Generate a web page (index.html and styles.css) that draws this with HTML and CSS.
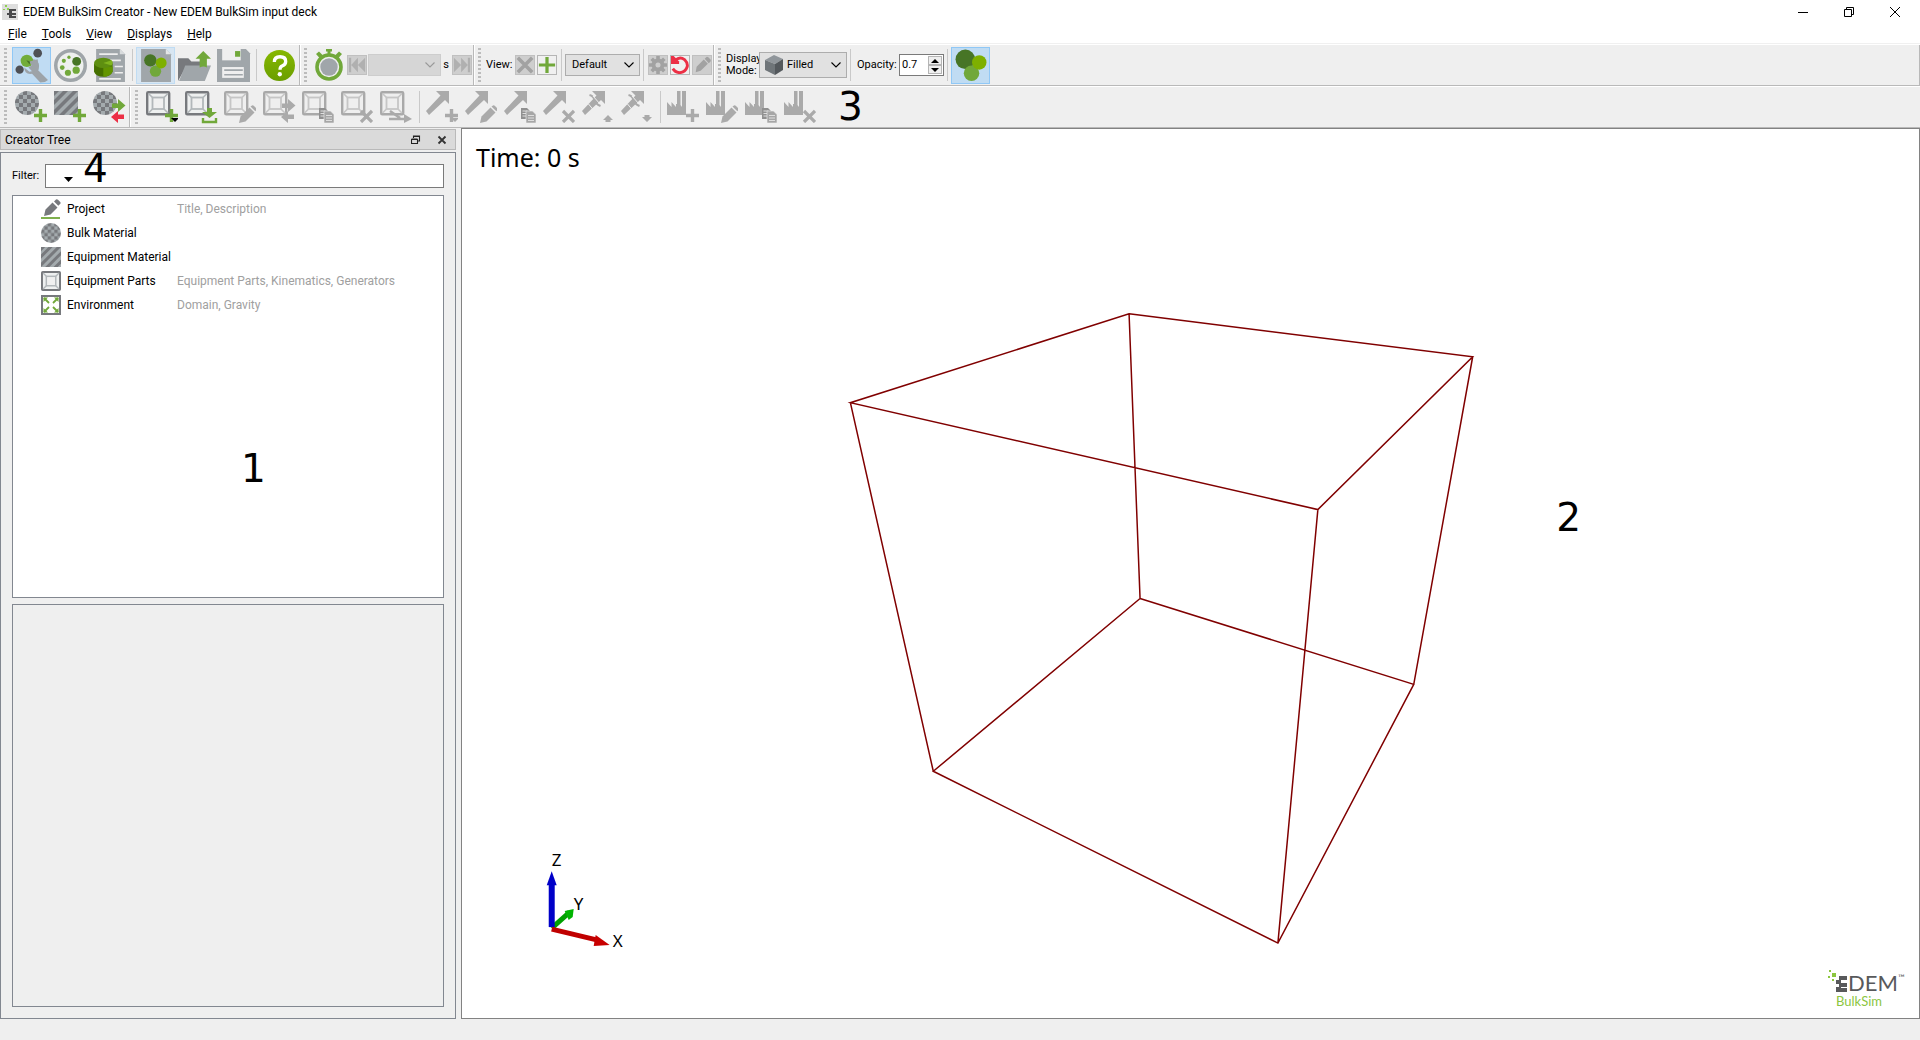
FILE: index.html
```html
<!DOCTYPE html>
<html lang="en">
<head>
<meta charset="utf-8">
<title>EDEM BulkSim Creator - New EDEM BulkSim input deck</title>
<link rel="stylesheet" href="styles.css">
</head>
<body>
<svg class="defs" aria-hidden="true">
  <defs>
    <pattern id="checks" width="8" height="8" patternUnits="userSpaceOnUse"><rect width="8" height="8" fill="#a4abae"/><path d="M0 0h4v4H0zM4 4h4v4H4z" fill="#77797d"/></pattern>
    <linearGradient id="helpfill" x1="0" y1="0" x2="0" y2="1"><stop offset="0" stop-color="#86b800"/><stop offset="1" stop-color="#6a9e00"/></linearGradient>
  </defs>
  <symbol id="plus" viewBox="0 0 32 32"><path d="M19 24.500h13M25.500 18v13" stroke="currentColor" stroke-width="3.400"/></symbol>
  <symbol id="drop" viewBox="0 0 32 32"><path d="M25 27h8l-4 4z" fill="currentColor"/></symbol>
  <symbol id="cross" viewBox="0 0 32 32"><path d="M20 20l11 11M31 20L20 31" stroke="currentColor" stroke-width="3.200"/></symbol>
  <symbol id="pen" viewBox="0 0 32 32"><path d="M15 32l1.500-6.500 9-9 5 5-9 9z" fill="currentColor"/><path d="M26.500 15.500l1.500-1q1-.5 2 .5l2 2q1 1 .3 2l-1 1.300z" fill="currentColor"/></symbol>
  <symbol id="copy" viewBox="0 0 32 32"><path d="M17 17h6l2.500 2.500V28H17z" fill="#909090"/><path d="M18.500 20h5M18.500 22.500h5M18.500 25h5" stroke="#ddd"/><path d="M22 20h6.500l3.500 3.500V32H22z" fill="#a6a6a6" stroke="#efefef" stroke-width=".6"/><path d="M24 24.500h6M24 27h6M24 29.500h6" stroke="#ddd"/></symbol>
  <symbol id="frame" viewBox="0 0 32 32"><rect x="1.200" y="1.200" width="22" height="22" rx="1" fill="#eef0f0" stroke="#77797d" stroke-width="2.400"/><rect x="6.500" y="6.500" width="11.500" height="11.500" fill="#f0f0f0" stroke="#b2b7ba" stroke-width="1.800"/><path d="M2.500 2.500l4 4M22 2.500l-4 4M2.500 22l4-4M22 22l-4-4" stroke="#b2b7ba" stroke-width="1.600"/></symbol>
  <symbol id="frameoff" viewBox="0 0 32 32"><rect x="1.200" y="1.200" width="22" height="22" rx="1" fill="#efefef" stroke="#a9a9a9" stroke-width="2.400"/><rect x="6.500" y="6.500" width="11.500" height="11.500" fill="none" stroke="#c6c6c6" stroke-width="1.800"/><path d="M2.500 2.500l4 4M22 2.500l-4 4M2.500 22l4-4M22 22l-4-4" stroke="#c6c6c6" stroke-width="1.600"/></symbol>
  <symbol id="arrow" viewBox="0 0 32 32"><path d="M10 0h13v13l-4-4L3 24l-3-4L14.500 4.500z" fill="currentColor"/></symbol>
  <symbol id="brokenarrow" viewBox="0 0 32 32"><path d="M10 0h13v13l-4-4L3 24l-3-4L14.500 4.500z" fill="currentColor"/><path d="M7.500 4q4 1 5 5t6 6" fill="none" stroke="currentColor" stroke-width="2"/><path d="M11 5l7 8M6.500 13l5 6" fill="none" stroke="#efefef" stroke-width="1"/></symbol>
  <symbol id="factory" viewBox="0 0 32 32"><path d="M0 24V11l4.500 5v-5l4.500 5v-3h1V0h3.500v14l1.500 2V0H19v24z" fill="currentColor"/></symbol>
  <symbol id="balls" viewBox="0 0 32 32"><circle cx="11" cy="10" r="9.500" fill="#477526"/><circle cx="17" cy="23.500" r="7.500" fill="#71a83a"/><circle cx="24.500" cy="13" r="7" fill="#7eb000"/></symbol>
  <symbol id="stripes" viewBox="0 0 24 24"><rect width="24" height="24" fill="#a4abae"/><path d="M0 4V0h5L0 5zM0 9l9-9h5L0 14zM0 19L19 0h5L0 24zM5 24L24 5v5L10 24zM15 24l9-9v5l-4 4z" fill="#77797d"/></symbol>
  <symbol id="chev" viewBox="0 0 10 10"><path d="M.5 2.500L5 7l4.500-4.500" fill="none" stroke="currentColor" stroke-width="1.100"/></symbol>
</svg>

<header class="titlebar">
  <svg class="appicon" viewBox="0 0 16 16"><rect width="16" height="16" fill="#dedede"/><path d="M7 5h7v2h-4v2h4v2h-4v1h4v2H7v-3H5V9h2z" fill="#4b4b4d"/><path d="M3 1h2v2H3zM5 4h2v2H5zM1 5h2v1H1z" fill="#8fd050"/></svg>
  <h1 class="apptitle">EDEM BulkSim Creator - New EDEM BulkSim input deck</h1>
  <div class="wincontrols">
    <button class="winbtn" aria-label="Minimize"><svg viewBox="0 0 10 10"><path d="M0 5.500h10" stroke="#000"/></svg></button>
    <button class="winbtn" aria-label="Restore"><svg viewBox="0 0 10 10"><path d="M.5 2.500h7v7h-7zM2.500 2V.5h7v7H8" fill="none" stroke="#000"/></svg></button>
    <button class="winbtn" aria-label="Close"><svg viewBox="0 0 10 10"><path d="M0 0l10 10M10 0L0 10" stroke="#000"/></svg></button>
  </div>
</header>

<nav class="menubar">
  <button class="menu"><u>F</u>ile</button>
  <button class="menu"><u>T</u>ools</button>
  <button class="menu"><u>V</u>iew</button>
  <button class="menu"><u>D</u>isplays</button>
  <button class="menu"><u>H</u>elp</button>
</nav>

<div class="toolrow">
  <div class="toolbar">
    <i class="grip"></i>
    <button class="tool active" aria-label="Creator"><svg viewBox="0 0 32 32"><path d="M15.500 10Q21 9 23 14q1 4-1 6l10 10-3 2-4.500.5-8-8.500Q9 25 9 18l5 4 4-1 1-5z" fill="#9da3a8"/><circle cx="11.500" cy="11.500" r="6" fill="#72ad3a"/><path d="M11 11l4 1-1 3z" fill="#477526"/><path d="M14 12l8-2 1 10-6 2-4-4 3-2z" fill="#9da3a8"/><circle cx="22" cy="4" r="4.200" fill="#4e5055"/><circle cx="4.500" cy="20" r="4" fill="#4e5055"/></svg></button>
    <button class="tool" aria-label="Simulator"><svg viewBox="0 0 32 32"><circle cx="16" cy="16" r="14.300" fill="#eef0ee" stroke="#9fa5a9" stroke-width="3.400"/><circle cx="22" cy="12" r="4.300" fill="#477526"/><circle cx="21.500" cy="20.500" r="3.500" fill="#71a83a"/><circle cx="13.500" cy="23" r="3" fill="#71a83a"/><circle cx="8" cy="18" r="2.300" fill="#71a83a"/><circle cx="9.500" cy="11.500" r="2" fill="#71a83a"/><circle cx="14.500" cy="8" r="1.600" fill="#71a83a"/></svg></button>
    <button class="tool" aria-label="Analyst"><svg viewBox="0 0 32 32"><path d="M3 0h23l5 5v27H3z" fill="#a0a6aa"/><path d="M26 0v5h5z" fill="#d9dcdd"/><path d="M6 5h18M6 11h21M21 17h8M21 23h8M6 29h21" stroke="#eee" stroke-width="1.600"/><path d="M1 14v8q2 5 9 5t9-5v-8z" fill="#467000"/><path d="M10 17h9v5q-3 5-9 5z" fill="#639500"/><ellipse cx="10" cy="13.500" rx="9" ry="5" fill="#5e8f10"/><path d="M10 13.500l8 2.500q2-3 0-5z" fill="#80b51e"/></svg></button>
    <i class="sep"></i>
    <button class="tool hover" aria-label="New"><svg viewBox="0 0 32 32"><path d="M2 0h24l5 5v27H2z" fill="#a0a6aa"/><path d="M26 0v5h5z" fill="#e4e6e7"/><circle cx="11" cy="11" r="6" fill="#477526"/><circle cx="16" cy="21.500" r="5.500" fill="#71a83a"/><circle cx="21.500" cy="13.500" r="5.300" fill="#7eb000"/></svg></button>
    <button class="tool" aria-label="Open"><svg viewBox="0 0 32 32"><path d="M0 9h10l3 3h12v5H8L0 31z" fill="#77797d"/><path d="M7 16h25l-6 15H1z" fill="#a0a6aa"/><path d="M24.500 2l7.500 7.500h-4V18q-3-2-7 0V9.500h-4z" fill="#71a83a"/></svg></button>
    <button class="tool" aria-label="Save"><svg viewBox="0 0 32 32"><path d="M0 0h28l4 4v28H0z" fill="#a0a6aa"/><path d="M5 0h18v11H5z" fill="#efefef"/><path d="M17.500 2h5v5.500h-5z" fill="#71a83a"/><path d="M5 17.500h21V28H5z" fill="#efefef"/><path d="M7 20.500h18M7 25h18" stroke="#a0a6aa" stroke-width="1.600"/></svg></button>
    <i class="sep"></i>
    <button class="tool" aria-label="Help"><svg viewBox="0 0 32 32"><circle cx="16" cy="16" r="15" fill="url(#helpfill)"/><path d="M11 12.500q0-5 5.500-5t5.500 4.500q0 3-3.500 4.500-2 1-2 3.500" fill="none" stroke="#fff" stroke-width="3.200"/><circle cx="16.300" cy="24.500" r="2.100" fill="#fff"/></svg></button>
  </div>
  <div class="toolbar">
    <i class="grip"></i>
    <span class="clock"><svg viewBox="0 0 30 34"><circle cx="15" cy="19" r="12" fill="#efefef" stroke="#71a83a" stroke-width="3.600"/><circle cx="15" cy="19" r="8.700" fill="#a0a6aa"/><path d="M12 1h6v2.500h-1.500V6h-3V3.500H12zM2 6l3-2.500 4 4-3 3zM28 6l-3-2.500-4 4 3 3z" fill="#71a83a"/></svg></span>
    <button class="mini off" aria-label="First step"><svg viewBox="0 0 20 20"><path d="M1 2h2.500v16H1zM11 2v16l-7.500-8zM19 2v16l-8-8z" fill="#b0b0b0"/></svg></button>
    <span class="combo time off"><select aria-label="Time step" disabled><option></option></select><svg class="chev"><use href="#chev"/></svg></span>
    <span class="unit">s</span>
    <button class="mini off" aria-label="Last step"><svg viewBox="0 0 20 20"><path d="M16.500 2H19v16h-2.500zM9 2v16l7.500-8zM1 2v16l8-8z" fill="#b0b0b0"/></svg></button>
  </div>
  <div class="toolbar">
    <i class="grip"></i>
    <label class="lbl view" for="view">View:</label>
    <button class="mini off" aria-label="Delete view"><svg viewBox="0 0 20 20"><path d="M2 2l16 16M18 2L2 18" stroke="#a2a2a2" stroke-width="4"/></svg></button>
    <button class="mini" aria-label="Add view"><svg viewBox="0 0 20 20"><path d="M1 10h18M10 1v18" stroke="#71a83a" stroke-width="3.600"/></svg></button>
    <i class="sep"></i>
    <span class="combo def"><select id="view"><option>Default</option></select><svg class="chev"><use href="#chev"/></svg></span>
    <i class="sep"></i>
    <button class="mini off" aria-label="View settings"><svg viewBox="0 0 20 20"><circle cx="10" cy="10" r="5" fill="none" stroke="#a2a2a2" stroke-width="4.400"/><path d="M10 0v4M10 16v4M0 10h4M16 10h4M3 3l3 3M14 14l3 3M17 3l-3 3M6 14l-3 3" stroke="#a2a2a2" stroke-width="4"/></svg></button>
    <button class="mini" aria-label="Reset view"><svg viewBox="0 0 20 20"><path d="M5 4.500Q10 0 15 4q4 4 3 8-2 6-8 6.500-5 0-8-4.500" fill="none" stroke="#ec2f45" stroke-width="3.200"/><path d="M0 0h3l6 6v3H0z" fill="#ec2f45"/></svg></button>
    <button class="mini off" aria-label="Rename view"><svg viewBox="0 0 20 20"><path d="M3 18l1-6 8-8 4.500 4.500-8 8zM13 3l2-2q1-.5 2 .5L19.500 4q.5 1 0 2l-2 2z" fill="#a2a2a2"/></svg></button>
  </div>
  <div class="toolbar last">
    <i class="grip"></i>
    <label class="lbl mode" for="mode">Display<br>Mode:</label>
    <span class="combo filled"><svg class="cube" viewBox="0 0 18 20"><path d="M9 0l9 4-8 5-10-4z" fill="#90969b"/><path d="M0 5l10 4v11L0 15z" fill="#6f7579"/><path d="M10 9l8-5v11l-8 5z" fill="#53585c"/></svg><select id="mode"><option>Filled</option></select><svg class="chev"><use href="#chev"/></svg></span>
    <i class="sep"></i>
    <label class="lbl opac" for="opacity">Opacity:</label>
    <span class="spin"><input id="opacity" type="number" step="0.1" value="0.7"><span class="steps"><button aria-label="Increase"><svg viewBox="0 0 8 4"><path d="M0 4h8L4 0z"/></svg></button><button aria-label="Decrease"><svg viewBox="0 0 8 4"><path d="M0 0h8L4 4z"/></svg></button></span></span>
    <i class="sep"></i>
    <button class="tool active" aria-label="Show particles"><svg><use href="#balls"/></svg></button>
  </div>
</div>

<div class="toolrow second">
  <div class="toolbar">
    <i class="grip"></i>
    <button class="tool" aria-label="Add bulk material"><svg viewBox="0 0 32 32"><circle cx="12" cy="12" r="12" fill="url(#checks)"/><use href="#plus" color="#71a83a"/></svg></button>
    <button class="tool" aria-label="Add equipment material"><svg viewBox="0 0 32 32"><use href="#stripes" width="24" height="24"/><use href="#plus" color="#71a83a"/></svg></button>
    <button class="tool" aria-label="Transfer materials"><svg viewBox="0 0 32 32"><circle cx="12" cy="12" r="12" fill="url(#checks)"/><path d="M19 12.500h6V8l7.500 6.500L25 21v-4h-6z" fill="#71a83a"/><path d="M31 23.500h-6V20l-7 6 7 6v-4h6z" fill="#ec2f45"/></svg></button>
  </div>
  <div class="toolbar last">
    <i class="grip"></i>
    <button class="tool" aria-label="Add part"><svg viewBox="0 0 32 32"><use href="#frame"/><use href="#plus" color="#71a83a"/><use href="#drop"/></svg></button>
    <button class="tool" aria-label="Import part"><svg viewBox="0 0 32 32"><use href="#frame"/><path d="M22 17h5v4h5l-7.500 6-7.500-6h5z" fill="#71a83a"/><path d="M18 27v4h13v-4" fill="none" stroke="#71a83a" stroke-width="2.400"/></svg></button>
    <button class="tool" aria-label="Edit part" disabled><svg viewBox="0 0 32 32"><use href="#frameoff"/><use href="#pen"/></svg></button>
    <button class="tool" aria-label="Transfer part" disabled><svg viewBox="0 0 32 32"><use href="#frameoff"/><path d="M19 12.500h6V8l7.500 6.500L25 21v-4h-6zM31 23.500h-6V20l-7 6 7 6v-4h6z" fill="currentColor"/></svg></button>
    <button class="tool" aria-label="Copy part" disabled><svg viewBox="0 0 32 32"><use href="#frameoff"/><use href="#copy"/></svg></button>
    <button class="tool" aria-label="Delete part" disabled><svg viewBox="0 0 32 32"><use href="#frameoff"/><use href="#cross"/></svg></button>
    <button class="tool" aria-label="Move part" disabled><svg viewBox="0 0 32 32"><use href="#frameoff"/><path d="M10 20l10 7M9 28h17" stroke="currentColor" stroke-width="2.600"/><path d="M24 23l8 5-8 4z" fill="currentColor"/></svg></button>
    <i class="sep"></i>
    <button class="tool" aria-label="Add kinematic" disabled><svg viewBox="0 0 32 32"><use href="#arrow"/><use href="#plus"/><use href="#drop"/></svg></button>
    <button class="tool" aria-label="Edit kinematic" disabled><svg viewBox="0 0 32 32"><use href="#arrow"/><use href="#pen"/></svg></button>
    <button class="tool" aria-label="Copy kinematic" disabled><svg viewBox="0 0 32 32"><use href="#arrow"/><use href="#copy"/></svg></button>
    <button class="tool" aria-label="Delete kinematic" disabled><svg viewBox="0 0 32 32"><use href="#arrow"/><use href="#cross"/></svg></button>
    <button class="tool" aria-label="Kinematic up" disabled><svg viewBox="0 0 32 32"><use href="#brokenarrow"/><path d="M21 29l5-5 5 5h-2.500v2h-5v-2z" fill="currentColor"/></svg></button>
    <button class="tool" aria-label="Kinematic down" disabled><svg viewBox="0 0 32 32"><use href="#brokenarrow"/><path d="M21 26l5 5 5-5h-2.500v-2h-5v2z" fill="currentColor"/></svg></button>
    <i class="sep"></i>
    <button class="tool" aria-label="Add generator" disabled><svg viewBox="0 0 32 32"><use href="#factory"/><use href="#plus"/></svg></button>
    <button class="tool" aria-label="Edit generator" disabled><svg viewBox="0 0 32 32"><use href="#factory"/><use href="#pen"/></svg></button>
    <button class="tool" aria-label="Copy generator" disabled><svg viewBox="0 0 32 32"><use href="#factory"/><use href="#copy"/></svg></button>
    <button class="tool" aria-label="Delete generator" disabled><svg viewBox="0 0 32 32"><use href="#factory"/><use href="#cross"/></svg></button>
    <span class="mark m3">3</span>
  </div>
</div>

<main class="work">
  <aside class="dock">
    <div class="dockhead">
      <h2>Creator Tree</h2>
      <button aria-label="Float"><svg viewBox="0 0 10 10"><path d="M.5 4.500h6v4h-6zM.5 4h6M2.500 3V1h6v5H7M2.500 1.500h6" fill="none" stroke="#222" stroke-width="1.100"/></svg></button>
      <button aria-label="Close dock"><svg viewBox="0 0 10 10"><path d="M1.500 1.500l7 7M8.500 1.500l-7 7" stroke="#333" stroke-width="1.800"/></svg></button>
    </div>
    <div class="dockbody">
      <div class="filter">
        <label class="lbl" for="filter">Filter:</label>
        <span class="filterbox"><input id="filter" type="text"><svg class="caret" viewBox="0 0 9 5"><path d="M0 0h9L4.500 5z"/></svg><span class="mark m4">4</span></span>
      </div>
      <div class="pane tree">
        <ul>
          <li><svg viewBox="0 0 20 20"><path d="M3 17l1.500-6.500 7-7 5 5-7 7zM13 2.500l2-2q1-.8 2 .2l2 2q1 1 .3 2l-2 2z" fill="#77797d"/><path d="M0 19h19" stroke="#71a83a" stroke-width="1.800"/></svg><span>Project</span><span class="hint">Title, Description</span></li>
          <li><svg viewBox="0 0 24 24"><circle cx="12" cy="12" r="12" fill="url(#checks)"/></svg><span>Bulk Material</span></li>
          <li><svg><use href="#stripes"/></svg><span>Equipment Material</span></li>
          <li><svg viewBox="0 0 24.400 24.400"><use href="#frame" width="32" height="32"/></svg><span>Equipment Parts</span><span class="hint">Equipment Parts, Kinematics, Generators</span></li>
          <li><svg viewBox="0 0 20 20"><rect x="1" y="1" width="18" height="18" fill="#fff" stroke="#77797d" stroke-width="2"/><path d="M3 3l5 5M17 3l-5 5M3 17l5-5M17 17l-5-5" stroke="#71a83a" stroke-width="1.800"/><path d="M2.500 2.500H7L2.500 7zM17.500 2.500H13L17.500 7zM2.500 17.500H7L2.500 13zM17.500 17.500H13l4.500-4.500z" fill="#71a83a"/></svg><span>Environment</span><span class="hint">Domain, Gravity</span></li>
        </ul>
        <span class="mark m1">1</span>
      </div>
      <div class="pane"></div>
    </div>
  </aside>
  <section class="viewport" aria-label="3D view">
    <svg class="scene" viewBox="0 0 1457 890" preserveAspectRatio="xMidYMid meet">
      <path d="M667 185L1011 228L856 381L388 274ZM678 470L952 556L816 815L471 643ZM667 185L678 470M1011 228L952 556M856 381L816 815M388 274L471 643" fill="none" stroke="#800000" stroke-width="1.500"/>
      <path d="M89 800l18-16" stroke="#00a000" stroke-width="5"/><path d="M102 783l9-2-1 8-4 3z" fill="#00b400"/>
      <path d="M89 799l0-45" stroke="#0000c8" stroke-width="6"/><path d="M84 757l5-14 5 14z" fill="#0000c8"/>
      <path d="M89 801l46 11" stroke="#c00000" stroke-width="5"/><path d="M133 807l14 10-16 1z" fill="#c80000"/>
      <text class="axis" x="89" y="738">Z</text><text class="axis" x="111" y="782">Y</text><text class="axis" x="150" y="819">X</text>
    </svg>
    <p class="clocktext">Time: 0 s</p>
    <span class="mark m2">2</span>
    <div class="logo">
      <div class="brand"><svg viewBox="0 0 20 24"><path d="M4 3h4v4H4zM1 0h2v2H1zM0 6h2v2H0zM4 9h2v2H4z" fill="#8cc63f"/><path d="M11 6h8v4h-6v3h6v4h-6v1h6v4H8v-5h3v-3H8v-4h3z" fill="#58595b"/></svg><span>DEM</span><span class="tm">™</span></div>
      <div class="sub">BulkSim</div>
    </div>
  </section>
</main>
<footer class="status"></footer>
</body>
</html>
```

FILE: styles.css
```css
* { box-sizing: border-box; }

body {
  margin: 0;
  height: 100vh;
  display: flex;
  flex-direction: column;
  background: #efefef;
  color: #000;
  font: 12px/16px Roboto, "Open Sans", sans-serif;
}

button, input, select { font: inherit; color: inherit; }
button { border: 0; padding: 0; background: none; }
svg { display: block; }
.defs { position: absolute; width: 0; height: 0; }

.titlebar {
  display: flex;
  align-items: center;
  height: 23px;
  flex: none;
  padding-left: 2px;
  background: #fff;
}
.appicon { width: 16px; height: 16px; }
.apptitle { margin: 0 0 0 5px; font-size: 12px; font-weight: 400; }
.wincontrols { display: flex; margin-left: auto; padding-right: 2px; }
.winbtn { width: 46px; height: 20px; display: grid; place-items: center; }
.winbtn svg { width: 10px; height: 10px; }

.menubar {
  display: flex;
  height: 21px;
  flex: none;
  padding-left: 8px;
  gap: 15px;
  background: #fff;
  border-bottom: 1px solid #f0f0f0;
}
.menu { line-height: 22px; }

.toolrow { display: flex; flex: none; height: 42px; border-bottom: 1px solid #b9b9b9; border-top: 1px solid #fff; }
.toolbar {
  display: flex;
  align-items: center;
  padding-left: 4px;
  border-right: 1px solid #b9b9b9;
}
.toolbar + .toolbar { border-left: 1px solid #fff; padding-left: 3px; }
.toolbar.last { flex: 1; }
.second .toolbar.last { border-right: 0; padding-left: 4px; }

.grip {
  width: 3px;
  height: 34px;
  margin-right: 5px;
  background: repeating-linear-gradient(#bcbcbc 0 2px, #efefef 2px 4px);
}
.sep { width: 1px; height: 32px; margin: 0 3px; background: #c9c9c9; }

.tool {
  width: 39px;
  height: 37px;
  display: grid;
  place-items: center;
  border: 1px solid transparent;
}
.tool svg { width: 33px; height: 33px; overflow: visible; }
.second .tool svg { width: 32px; height: 32px; }
.second .tool { place-content: center start; padding-left: 2px; }
.tool:disabled { color: #aaa; }
.tool.active { background: #c0dcf3; border-color: #90c8f6; }
.tool.hover { background: #d8e6f2; border-color: #c0dcf3; }
.clock { padding: 0 2px; }
.clock svg { width: 30px; height: 34px; }

.mini {
  width: 20px;
  height: 20px;
  margin: 0 1px;
  border: 1px solid #b5b5b5;
  background: #f0f0f0;
}
.mini.off { background: #cecece; border-color: #c0c0c0; }
.mini svg { width: 18px; height: 18px; }

.combo { display: grid; position: relative; height: 22px; font-size: 11px; line-height: 14px; }
.combo select {
  appearance: none;
  width: 100%;
  height: 100%;
  padding: 0 20px 0 6px;
  border: 1px solid #adadad;
  border-radius: 0;
  background: #e1e1e1;
}
.combo.off select { background: #ccc; border-color: #bfbfbf; }
.combo.off { color: #999; }
.chev { position: absolute; right: 6px; top: 50%; width: 10px; height: 10px; margin-top: -5px; pointer-events: none; }
.time { width: 73px; }
.def { width: 75px; }
.combo.filled { width: 88px; height: 26px; }
.filled select { padding-left: 27px; }
.cube { position: absolute; left: 6px; top: 3px; width: 18px; height: 20px; }
.unit { width: 10px; text-align: center; font-size: 11px; }

.lbl { font-size: 11px; line-height: 12px; }
.view { width: 28px; }
.mode { width: 33px; white-space: nowrap; }
.opac { width: 45px; padding-left: 3px; }

.spin { display: flex; width: 45px; height: 22px; border: 1px solid #7a7a7a; background: #fff; font-size: 11px; }
.spin input { flex: 1; min-width: 0; border: 0; padding: 0 2px; background: none; appearance: textfield; }
.spin input::-webkit-inner-spin-button { appearance: none; }
.steps { display: flex; flex-direction: column; width: 15px; padding: 1px 1px 1px 0; }
.steps button { flex: 1; display: grid; place-items: center; border: 1px solid #b5b5b5; background: #efefef; }
.steps svg { width: 8px; height: 4px; }

.work { flex: 1; display: flex; gap: 5px; min-height: 0; }

.dock { flex: none; width: 456px; display: flex; flex-direction: column; gap: 2px; padding-top: 1px; }
.dockhead {
  display: flex;
  align-items: center;
  height: 21px;
  flex: none;
  padding: 0 8px 0 4px;
  border: 1px solid #b9b9b9;
  background: #dadada;
}
.dockhead h2 { flex: 1; margin: 0; font-size: 12px; font-weight: 400; }
.dockhead button { margin-left: 16px; }
.dockhead svg { width: 10px; height: 10px; }
.dockbody {
  flex: 1;
  min-height: 0;
  display: flex;
  flex-direction: column;
  gap: 6px;
  padding: 11px;
  border: 1px solid #828790;
}
.filter { display: flex; align-items: center; margin-bottom: 1px; }
.filter .lbl { width: 33px; }
.filterbox { flex: 1; position: relative; }
.filterbox input { display: block; width: 100%; height: 24px; border: 1px solid #7a7a7a; padding: 0 4px; }
.caret { position: absolute; left: 19px; top: 13px; width: 9px; height: 5px; }

.pane { flex: 1; min-height: 0; border: 1px solid #828790; }
.tree { position: relative; background: #fff; }
.tree ul { margin: 0; padding: 1px 0 0 28px; list-style: none; }
.tree li { display: grid; grid-template-columns: 26px 110px 1fr; align-items: center; height: 24px; white-space: nowrap; }
.tree li svg { width: 20px; height: 20px; }
.hint { color: #a0a0a0; }

.viewport { flex: 1; min-width: 0; position: relative; border: 1px solid #828282; background: #fff; }
.scene { width: 100%; height: 100%; }
.axis { font: 17px "Noto Sans", sans-serif; }
.clocktext { position: absolute; left: 14px; top: 12px; margin: 0; font: 25px/32px "Noto Sans", sans-serif; }

.mark { font: 39px/40px "DejaVu Sans", sans-serif; }
.m1, .m2, .m4 { position: absolute; }
.m1 { left: 228px; top: 253px; }
.m2 { right: 338px; bottom: 480px; }
.m3 { margin-left: 18px; }
.m4 { left: 38px; top: -15px; }

.logo { position: absolute; right: 13px; bottom: 10px; width: 78px; font-family: Lato, sans-serif; }
.brand { display: flex; align-items: flex-end; height: 22px; color: #58595b; font-size: 22px; line-height: 22px; }
.brand svg { width: 20px; height: 24px; flex: none; }
.tm { align-self: flex-start; font-size: 9px; line-height: 11px; }
.sub { padding-left: 8px; color: #8cc63f; font-size: 13px; line-height: 14px; }

.status { height: 21px; flex: none; }
```
